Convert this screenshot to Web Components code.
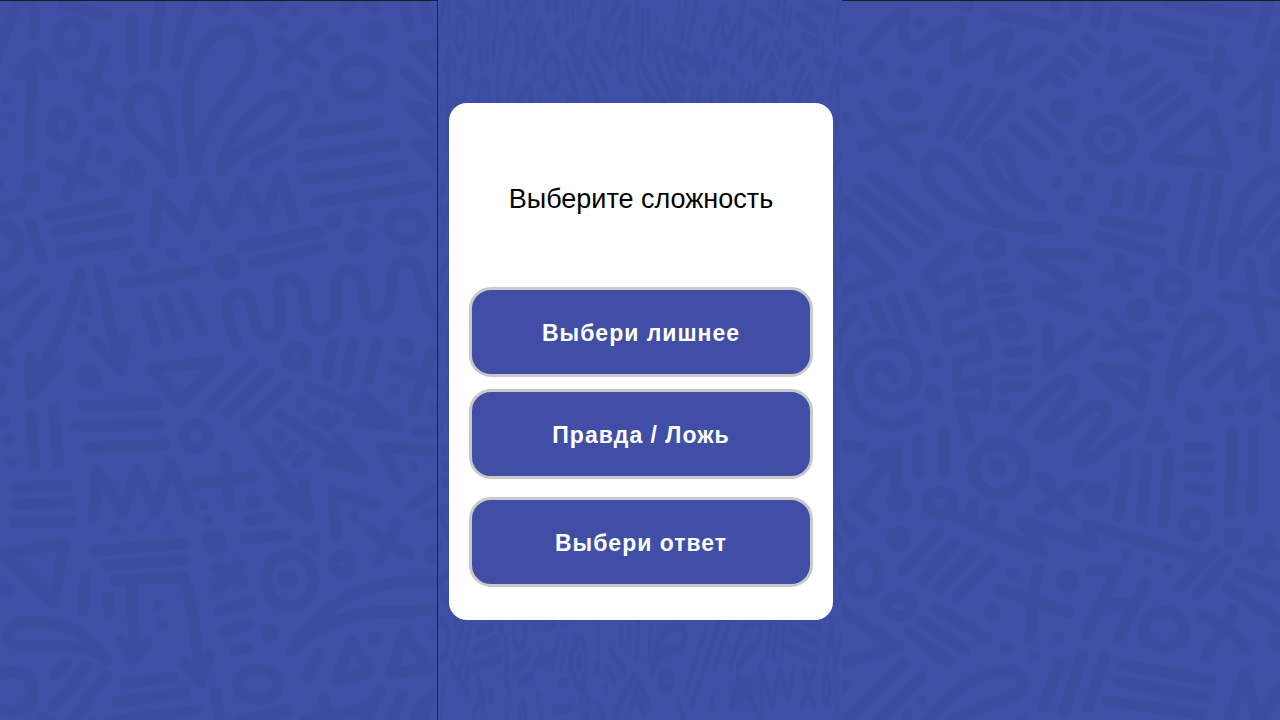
<!DOCTYPE html>
<html lang="ru">
<head>
<meta charset="utf-8">
<meta name="viewport" content="width=device-width, initial-scale=1">
<title>Выберите сложность</title>
<style>
html, body { height: 100%; margin: 0; }
body { background: #3f4fa6; font-family: "Liberation Sans", Arial, sans-serif; }
</style>
</head>
<body>
<game-screen>
  <difficulty-card>
    <span slot="title">Выберите сложность</span>
    <choice-button>Выбери лишнее</choice-button>
    <choice-button>Правда / Ложь</choice-button>
    <choice-button slot="last">Выбери ответ</choice-button>
  </difficulty-card>
</game-screen>
<script>
// Doodle wallpaper, drawn on a sheet 3840 wide, in tiles: offset, strokes, rings [x,y,rx,ry], dots [x,y,r].
// A tile with kx and ky holds its coordinates in a squeezed grid; they are spread over the sheet, pen width unchanged.
const TILES = [
  { x: 0, y: 0,
    d: 'M-10 170C10 100 40 30 60 0C100-20 115 30 98 100M190 10L320 42M395 50C395 100 395 150 402 205M485 0C470 60 465 120 465 190M580 0C550 60 535 120 528 188M755 5L800 35L840 5M835 118L945 190M832 208C880 160 920 110 968 75M1035 25L1060 0M1105 0L1128 25M1215 5L1228 75M1275 5L1285 55M1320 130L1240 140L1320 215M1215 210L1320 305M50 225L108 160L160 220M95 190L90 465M318 145C290 220 270 260 265 315M230 220L335 278M515 515C515 400 500 330 490 300C470 255 440 250 415 265C370 300 385 360 420 400C450 440 500 450 515 515M585 510C550 300 550 200 640 110C700 60 760 80 755 160C740 260 600 340 590 500M665 510C680 400 780 290 860 283C910 290 890 350 820 400C770 435 700 450 665 505M765 492L850 445M262 425C235 520 210 540 195 585M155 487L290 550M910 397L1135 368M905 468L1185 430M915 535L1210 495M945 605L1280 555M1320 330L1230 318L1320 405M1320 432L1250 430L1320 500M150 645L355 605M170 692L385 655M-5 630L65 608M462 725L475 580L565 685L610 560L672 675L730 545L792 660L840 525L885 655M745 735L955 692M-5 680L25 690L55 725',
    rings: [[215,112,43,50],[1080,233,70,56],[185,373,30,40],[397,515,22,28],[1220,678,52,42]],
    dots: [[658,12,32],[888,30,15],[850,72,16],[1007,122,26],[1135,92,34],[315,373,30],[22,293,16],[35,350,15],[8,400,18],[312,463,23],[93,547,29],[-5,550,15],[918,247,18],[965,322,20],[1000,660,26],[1093,645,24],[1075,715,34]] },
  { x: 0, y: 720,
    d: 'M0 80C50 70 60 30 55 -10L20-45M90 -50L128 52M185 35L385 5M725 18L960-25M760 68L970 18M370 128L590 92M0 195L105 120M50 282L135 168M240 100C200 250 160 300 92 465L92 350M92 465L175 372M100 400L140 375M298 90C320 200 340 280 360 390M288 305L360 390L380 295M345 310L355 350M260 185L260 210M437 195L470 300M493 175L535 285M557 162L610 270M710 310C690 240 670 200 690 170C720 145 745 150 755 200C770 260 780 290 810 290C860 280 840 200 835 150C840 100 890 100 910 150C925 200 910 270 960 270C1030 260 1010 190 1007 130C1015 80 1070 75 1085 120C1105 170 1080 220 1125 235C1200 220 1160 130 1185 80C1210 50 1250 50 1265 110C1280 160 1270 210 1320 225M1000 310L980 405M1062 305L1035 430M1135 305L1107 415M0 320L20 310M0 340L30 365M455 385L660 360L540 485ZM630 495L757 370M680 520L805 400M735 550L860 432M250 495L470 492M228 555L475 553M268 622L495 612M92 525L105 675M162 507L175 668M930 440L1195 555L1095 467M1195 555L1075 545L1100 515L1150 535M838 522L1090 690L1018 595M1090 690L980 662L1010 635L1050 660M950 538L975 518M983 555L1010 533M857 640L880 618M893 667L920 642M1295 335L1240 510M1185 382L1320 425M1255 572L1320 572M1320 635L1145 620L1200 725M775 605L930 830L912 730M930 830L838 770L870 740L905 800M678 650L690 800M590 730L765 708M282 828L292 690L370 815L412 685L467 815L515 670L570 810',
    rings: [[890,350,30,30],[587,587,36,38]],
    dots: [[418,65,27],[520,40,21],[617,12,17],[1065,5,34],[682,80,40],[248,263,17],[1217,320,28],[-10,450,30],[267,410,38],[17,540,16],[28,597,18],[35,667,17],[908,492,19],[838,585,19],[1182,445,18],[1305,510,20],[1243,680,15]] },
  { x: 0, y: 1440,
    d: 'M45 22L200 14M50 72L210 67M45 128L212 124M750 120L812 110M735 175L862 163M15 220L193 190L160 365ZM285 212L550 190M318 255L555 240M345 300L550 290C580 350 590 500 602 610L555 545M602 610L630 525M580 555L615 550M395 310L405 540L362 485M405 540L440 490M380 500L425 495M257 290L248 393M325 350L330 400M5 325L25 330M320 540C250 440 180 425 90 423C0 430 0 500 90 500C200 500 260 490 320 540M165 585L200 550M160 680L260 562M215 725L318 585M650 260L730 305M720 250L650 325M660 390L755 368M675 455L745 435M705 508L740 505M920 190L945 175M1010 165L1000 35L1125 72M1110 150L1230 225M1195 130L1140 240M1235 75L1320 20M1285 100L1320 90M875 510C960 400 1050 290 1320 302M875 510C1000 400 1080 395 1200 395C1260 395 1290 390 1320 380M958 520L920 590M1055 485L1110 575L1010 600ZM1215 455L1290 565L1175 580ZM375 610L520 592M350 668L555 637M330 725L590 692M648 635L660 725M720 725L865 690M970 655L980 700M920 720L1120 680M1145 630L1090 725M1210 645L1175 725M1320 650C1270 660 1250 690 1245 725',
    rings: [[35,635,65,60],[870,300,72,78],[1027,252,26,26],[775,613,60,45]],
    dots: [[348,147,17],[425,140,14],[505,137,13],[613,73,16],[622,120,15],[762,67,24],[644,185,37],[477,375,16],[488,435,18],[812,458,27],[865,295,30],[945,208,14],[1062,110,17],[1305,222,30],[1190,0,15],[1125,478,23],[1305,460,17]] },
  { x: 2520, y: 0,
    d: 'M68 150C120 90 150 50 190 32L188 90C190 120 205 140 220 142C260 130 320 70 365 60C350 110 345 150 350 178C390 185 450 110 505 100C490 140 475 180 483 205C510 220 560 160 605 148M460 38L665 80M710 5L708 45M775 5L768 65M830 30L815 80M890 50L1090 98M980 0L1215 42M950 120L1090 150M740 115L768 140M695 145L738 178M655 180L700 215M620 212L662 245M588 255L645 205M830 150L812 212L918 170M1140 150L1128 255M1075 198L1175 210M1285 15L1252 125M1318 90L1305 140M858 295L958 220M902 330L998 260M930 375L1035 295M1110 335L945 470L1160 490ZM1200 310L1295 200L1320 220M1287 215L1272 435M75 315C100 370 170 420 205 480M68 440C120 415 170 380 250 376M380 265L305 395M445 280L355 410M515 282L390 435M98 525L295 680M50 562L260 725M15 605L160 725M570 335L668 420M520 378L615 462M-10 215L50 235M600 612C480 570 430 500 440 440C460 420 480 435 500 465C530 540 540 590 600 612M650 682C380 680 240 580 260 480C290 440 330 470 370 520C440 600 460 640 550 680M838 550L828 605M908 535L893 615M973 555L943 625M790 658L965 692M1075 525L1040 725M1135 535L1105 725M1320 505C1220 530 1190 620 1175 725M1320 590L1210 725M1320 665L1275 725',
    rings: [[194,298,34,18],[810,417,66,60]],
    dots: [[12,88,16],[240,67,21],[380,12,22],[650,18,20],[110,198,25],[197,212,18],[283,230,26],[1158,94,13],[773,276,14],[670,325,38],[808,412,22],[1210,383,21],[15,350,20],[692,484,18],[650,543,17],[744,536,19],[704,607,30]] },
  { x: 2520, y: 720,
    d: 'M0 50L45 5L150 100L0 155M50 20L145 100M130-10L200 40M240-10L255 0M350 20L265 100L300 158L385 110L402 205L315 225L322 300L425 265L440 340L352 360L352 438L440 415L435 500L360 480L388 590M440 105L490 95M448 145L510 138M455 190L515 180M502 335L565 330M492 385L560 385M485 440L558 432M735 42L555 35L708 135L590 155L730 210M770-15L960 35M835 50L858 140M795 110L895 88M1038-10L1028 60M1100-10L1088 70M1155-5L1150 100L1190-5M1228 65L1268 295M1150 165L1320 188M990 465C1000 300 1040 230 1110 225C1170 235 1150 290 1100 330C1050 370 1000 400 990 460M620 260L628 372L750 280M803 215C840 290 900 310 925 355M795 315L955 282M770 380L918 400L900 490ZM532 540L640 435C690 400 710 415 695 460L600 575C595 600 640 590 690 550L750 500C800 480 810 500 795 530L715 640C705 670 740 670 790 620L880 552M1100 425L1205 330L1200 435L1320 350M1310 390L1305 440M955 540L930 595L975 585M0 265L45 205M102 190L133 262M155 170L190 270M210 160L255 262M165 412C160 380 130 365 105 380C75 400 90 450 130 465C185 480 235 450 233 390C230 330 180 300 120 307C50 320 20 370 25 430C40 510 100 555 160 555C195 550 215 540 235 520M163 405C150 380 135 370 110 375M0 615L65 620M100 650L170 632L165 725M170 632L90 725M235 595L235 695M310 575L313 695M1045 620L1105 620M1045 675L1105 678M860 650L858 725M920 650L915 725M985 640L980 725M1175 580L1175 725M1240 575L1240 725M600 710L630 725',
    rings: [[450,15,34,30],[512,255,30,27],[1000,140,42,38],[478,682,76,78],[1335,90,35,50]],
    dots: [[77,262,14],[287,360,20],[280,458,27],[895,207,37],[995,233,18],[1268,10,20],[493,497,20],[1065,520,28],[1163,505,21],[1240,495,28],[473,677,28],[1315,527,12]] },
  { x: 2520, y: 1440,
    d: 'M100 0L40 70L100 115M0 130L45 155M340 105L610 215L545 120L765 198L740 130L1090 235M1125 210L1020 315M1160 235L1070 340M400 70L390 120M460 90L440 140M600 0L690 90M720 10L600 85M850 0L835 105M915 0L905 115M980 0L970 125M1045 18L1110 28M1170 0L1170 95M1240 0L1237 85M295 155L188 270M345 185L245 298M400 210L295 325M460 240L350 345M0 385L175 497L0 550M285 380L440 472M242 418L375 505M205 450L325 545M595 265C570 350 580 400 570 470M475 325L685 395M755 268L830 268L740 460M915 305L835 470M790 365L870 370M1235 215L1320 220M1290 175L1265 250M1200 275L1320 325M1165 320L1320 420M1085 400C1130 430 1180 440 1215 505M1180 385C1150 460 1110 490 1098 530M190 545L20 715M245 585L110 725M260 725C340 620 420 570 510 568C570 580 560 630 500 650L330 720M660 545L610 675M727 525L672 690M795 525L745 680M850 552L1110 597M835 602L1095 648M800 660L1085 700M1165 725L1215 575L1255 725L1320 620M0 630L20 610',
    rings: [[475,-35,78,72],[300,67,38,34],[770,40,22,22],[1064,130,34,36],[72,278,45,60],[177,376,38,30],[972,445,62,54]],
    dots: [[177,57,39],[175,173,38],[518,278,20],[683,302,34],[860,222,18],[925,241,15],[983,266,16],[1180,168,30],[457,394,24],[498,500,21],[655,471,18],[582,526,16],[243,658,17],[203,700,16],[1310,480,25]] },
  { x: 0, y: 0, kx: 3.16, ky: 1.08,
    d: 'M422 5L428 55M470 0L450 50M498 20L495 90L545 5M560 30L525 140M600 10L595 145M617 40L612 160M634 35L634 160M725 10L715 105M745 10L733 115M780 0L750 125M418 105L440 95L430 220L418 180M475 130L520 195M462 180L505 270M450 230L485 310M695 145L815 210L775 160M815 210L780 220L790 195M715 190L745 220M715 250L740 270M650 310C610 270 590 220 602 180C630 220 650 260 680 310M710 300C660 220 645 150 660 130C690 130 690 220 730 310M768 270L765 310M785 265L782 310',
    rings: [[557,190,50,50]],
    dots: [[570,45,30],[563,90,32],[660,60,14],[684,80,14]] },
  { x: 0, y: 1976, kx: 3.16, ky: 1.08,
    d: 'M483 50L483 120M550 50L550 100M575 50L572 120M605 35L598 140M640 50L635 155M645 190C640 130 680 50 720 50C760 60 750 120 700 125C670 130 650 150 645 190M798 80L745 245M798 190L765 285M518 125L560 185M505 175L530 215M530 320L590 200L635 285M570 320L595 250L620 310M40 165L90 255M8 320L20 210M120 210L140 270M105 330L130 250L140 330M200 190L215 250L205 330M245 220L280 200M245 330C240 270 270 260 260 330M300 260L310 330M350 305L400 295M365 225L390 220M480 290L500 330M720 280L740 330M970 330L900 200M880 290C880 230 940 200 945 225C940 260 900 270 880 290M970 170L975 330M970 170L1005 290L1025 190L1055 260L1070 180M1100 190L1130 290M1130 190L1095 290M1195 200L1200 300',
    rings: [[425,160,66,80],[685,215,60,26],[440,290,40,40],[1168,240,34,40]],
    dots: [[425,160,30],[480,175,26],[160,260,28],[505,240,24],[825,275,26],[88,190,26]] }
];
const spread = (d, kx, ky) => {
  let i = 0;
  return d.replace(/-?\d+/g, n => ' ' + Math.round(n * (i++ % 2 ? ky : kx)));
};
const tile = ({ x, y, kx = 1, ky = 1, d, rings, dots }) => `<g transform="translate(${x} ${y})">
  <path d="${spread(d, kx, ky)}"/>
  ${rings.map(([cx, cy, rx, ry]) => `<ellipse cx="${cx * kx}" cy="${cy * ky}" rx="${rx}" ry="${ry}"/>`).join('')}
  ${dots.map(([cx, cy, r]) => `<circle cx="${cx * kx}" cy="${cy * ky}" r="${r}" fill="#3c4d9f" stroke="none"/>`).join('')}
</g>`;
const DOODLES = TILES.map(tile).join('');

const VIEWS = {
  left: ['0 0 1314 2160', 'xMinYMin slice'],
  right: ['2526 0 1314 2160', 'xMinYMin slice'],
  narrow: ['0 0 3840 2336', 'none']
};

class DoodlePattern extends HTMLElement {
  connectedCallback() {
    if (this.shadowRoot) return;
    const [box, fit] = VIEWS[this.getAttribute('view')];
    this.attachShadow({ mode: 'open' }).innerHTML = `
      <style>
        :host { display: block; overflow: hidden; background: #3f4fa6; }
        svg { display: block; width: 100%; height: 100%; }
      </style>
      <svg viewBox="${box}" preserveAspectRatio="${fit}" aria-hidden="true"
        fill="none" stroke="#3c4d9f" stroke-width="34" stroke-linecap="round" stroke-linejoin="round">${DOODLES}</svg>`;
  }
}
customElements.define('doodle-pattern', DoodlePattern);

class GameScreen extends HTMLElement {
  constructor() {
    super();
    this.attachShadow({ mode: 'open' }).innerHTML = `
      <style>
        :host { display: grid; grid-template-columns: 1fr minmax(0, 404px) 1fr; min-height: 100%; }
        .side { contain: size; border-top: 1px solid #1e1e22; }
        .left { border-right: 1px solid #22243c; }
        main { display: grid; min-width: 0; }
        main > * { grid-area: 1 / 1; }
        .back { contain: size; }
        .content { display: flex; flex-direction: column; justify-content: center; padding: 3px 9px 0 11px; }
      </style>
      <doodle-pattern class="side left" view="left"></doodle-pattern>
      <main>
        <doodle-pattern class="back" view="narrow"></doodle-pattern>
        <div class="content"><slot></slot></div>
      </main>
      <doodle-pattern class="side" view="right"></doodle-pattern>`;
  }
}
customElements.define('game-screen', GameScreen);

class DifficultyCard extends HTMLElement {
  constructor() {
    super();
    this.attachShadow({ mode: 'open' }).innerHTML = `
      <style>
        :host { display: block; z-index: 1; background: #fff; border-radius: 18px; padding: 80px 20px 33px; }
        h1 { margin: 0 0 72px; font-size: 27px; line-height: 32px; font-weight: 400; text-align: center; color: #000; }
        .choices { display: flex; flex-direction: column; gap: 12px; }
        .last { margin-top: 18px; }
      </style>
      <h1><slot name="title"></slot></h1>
      <div class="choices"><slot></slot></div>
      <div class="last"><slot name="last"></slot></div>`;
  }
}
customElements.define('difficulty-card', DifficultyCard);

class ChoiceButton extends HTMLElement {
  constructor() {
    super();
    this.attachShadow({ mode: 'open' }).innerHTML = `
      <style>
        :host { display: block; }
        button {
          display: block; width: 100%; margin: 0; padding: 29px 16px 27px;
          border: 3px solid #c9c9c9; border-radius: 22px; background: #414ea5; color: #fff;
          font: 700 23px/28px "Liberation Sans", Arial, sans-serif; letter-spacing: 1px; cursor: pointer;
        }
        button:hover { background: #4a58b4; }
      </style>
      <button type="button"><slot></slot></button>`;
  }
}
customElements.define('choice-button', ChoiceButton);
</script>
</body>
</html>
